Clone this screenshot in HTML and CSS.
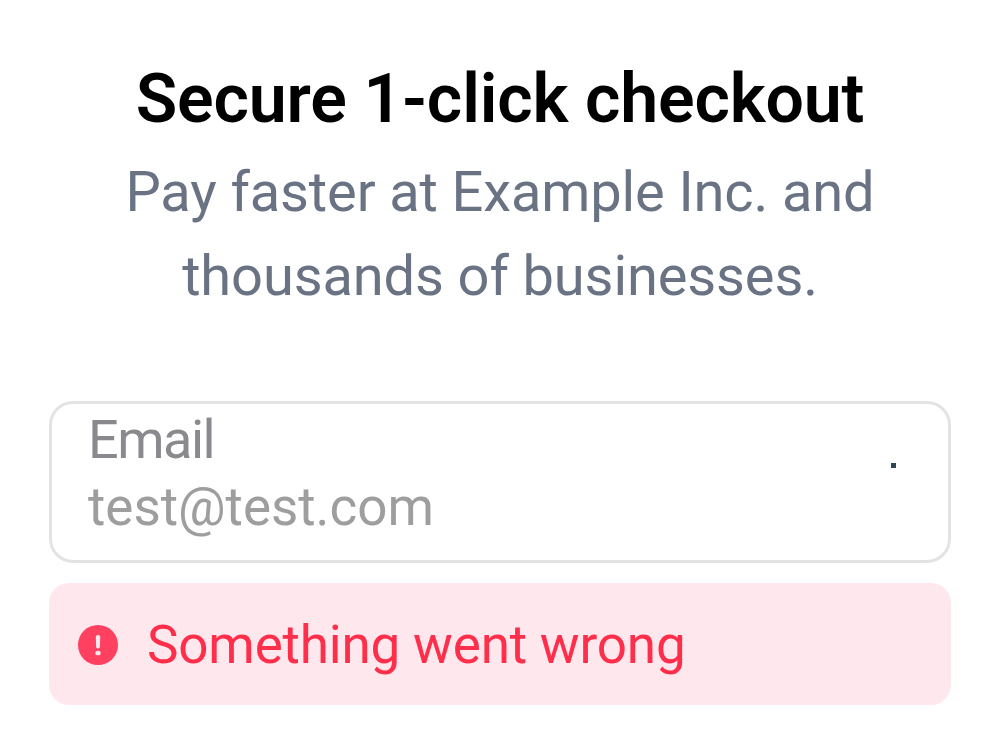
FILE: index.html
```html
<!DOCTYPE html>
<html lang="en">
<head>
<meta charset="utf-8">
<title>Checkout</title>
<link rel="stylesheet" href="styles.css">
</head>
<body>
<main class="checkout">
  <h1 class="title">Secure 1-click checkout</h1>
  <p class="subtitle">Pay faster at Example Inc. and<br>thousands of businesses.</p>
  <div class="field">
    <div class="field-text">
      <span class="label">Email</span>
      <span class="value">test@test.com</span>
    </div>
    <span class="dot"></span>
  </div>
  <div class="alert" role="alert">
    <svg class="alert-icon" viewBox="0 0 40 40" aria-hidden="true">
      <circle cx="20" cy="20" r="20" fill="#ff4060"/>
      <path d="M17.8 11.7Q17.8 10 20 10T22.2 11.7L21.9 21.8Q21.8 23.5 20 23.5T18.1 21.8Z" fill="#ffe8ed"/>
      <ellipse cx="20" cy="28" rx="2.7" ry="2.3" fill="#ffe8ed"/>
    </svg>
    <span class="message">Something went wrong</span>
  </div>
</main>
</body>
</html>
```

FILE: styles.css
```css
* { box-sizing: border-box; }
body { margin: 0; background: #fff; font-family: Roboto, sans-serif; }
.checkout { height: 754px; padding: 59px 49px 0; display: flex; flex-direction: column; }
.title { margin: 0; font-size: 68px; line-height: 80px; font-weight: 600; letter-spacing: -0.16px; text-align: center; color: #000; white-space: nowrap; }
.subtitle { margin: 11px 0 0; font-size: 56px; line-height: 84px; letter-spacing: -0.12px; text-align: center; color: #6a7383; white-space: nowrap; }
.field { margin-top: 83px; height: 162px; border: 3px solid #e3e3e3; border-radius: 24px; padding: 0 52px 0 36px; display: flex; justify-content: space-between; }
.field-text { display: flex; flex-direction: column; gap: 1px; padding-top: 2px; }
.label { font-size: 54px; line-height: 67px; letter-spacing: -1.5px; color: #8a8a8e; }
.value { font-size: 53px; line-height: 67px; letter-spacing: -0.03px; color: #9e9e9e; }
.dot { width: 5px; height: 5px; margin-top: 59px; background: #2b4756; }
.alert { margin-top: 20px; height: 122px; border-radius: 20px; background: #ffe8ed; padding: 2px 0 0 29px; display: flex; align-items: center; gap: 29px; }
.alert-icon { width: 40px; height: 40px; }
.message { font-size: 53px; line-height: 64px; letter-spacing: -0.18px; color: #ff2f4c; white-space: nowrap; }
```
